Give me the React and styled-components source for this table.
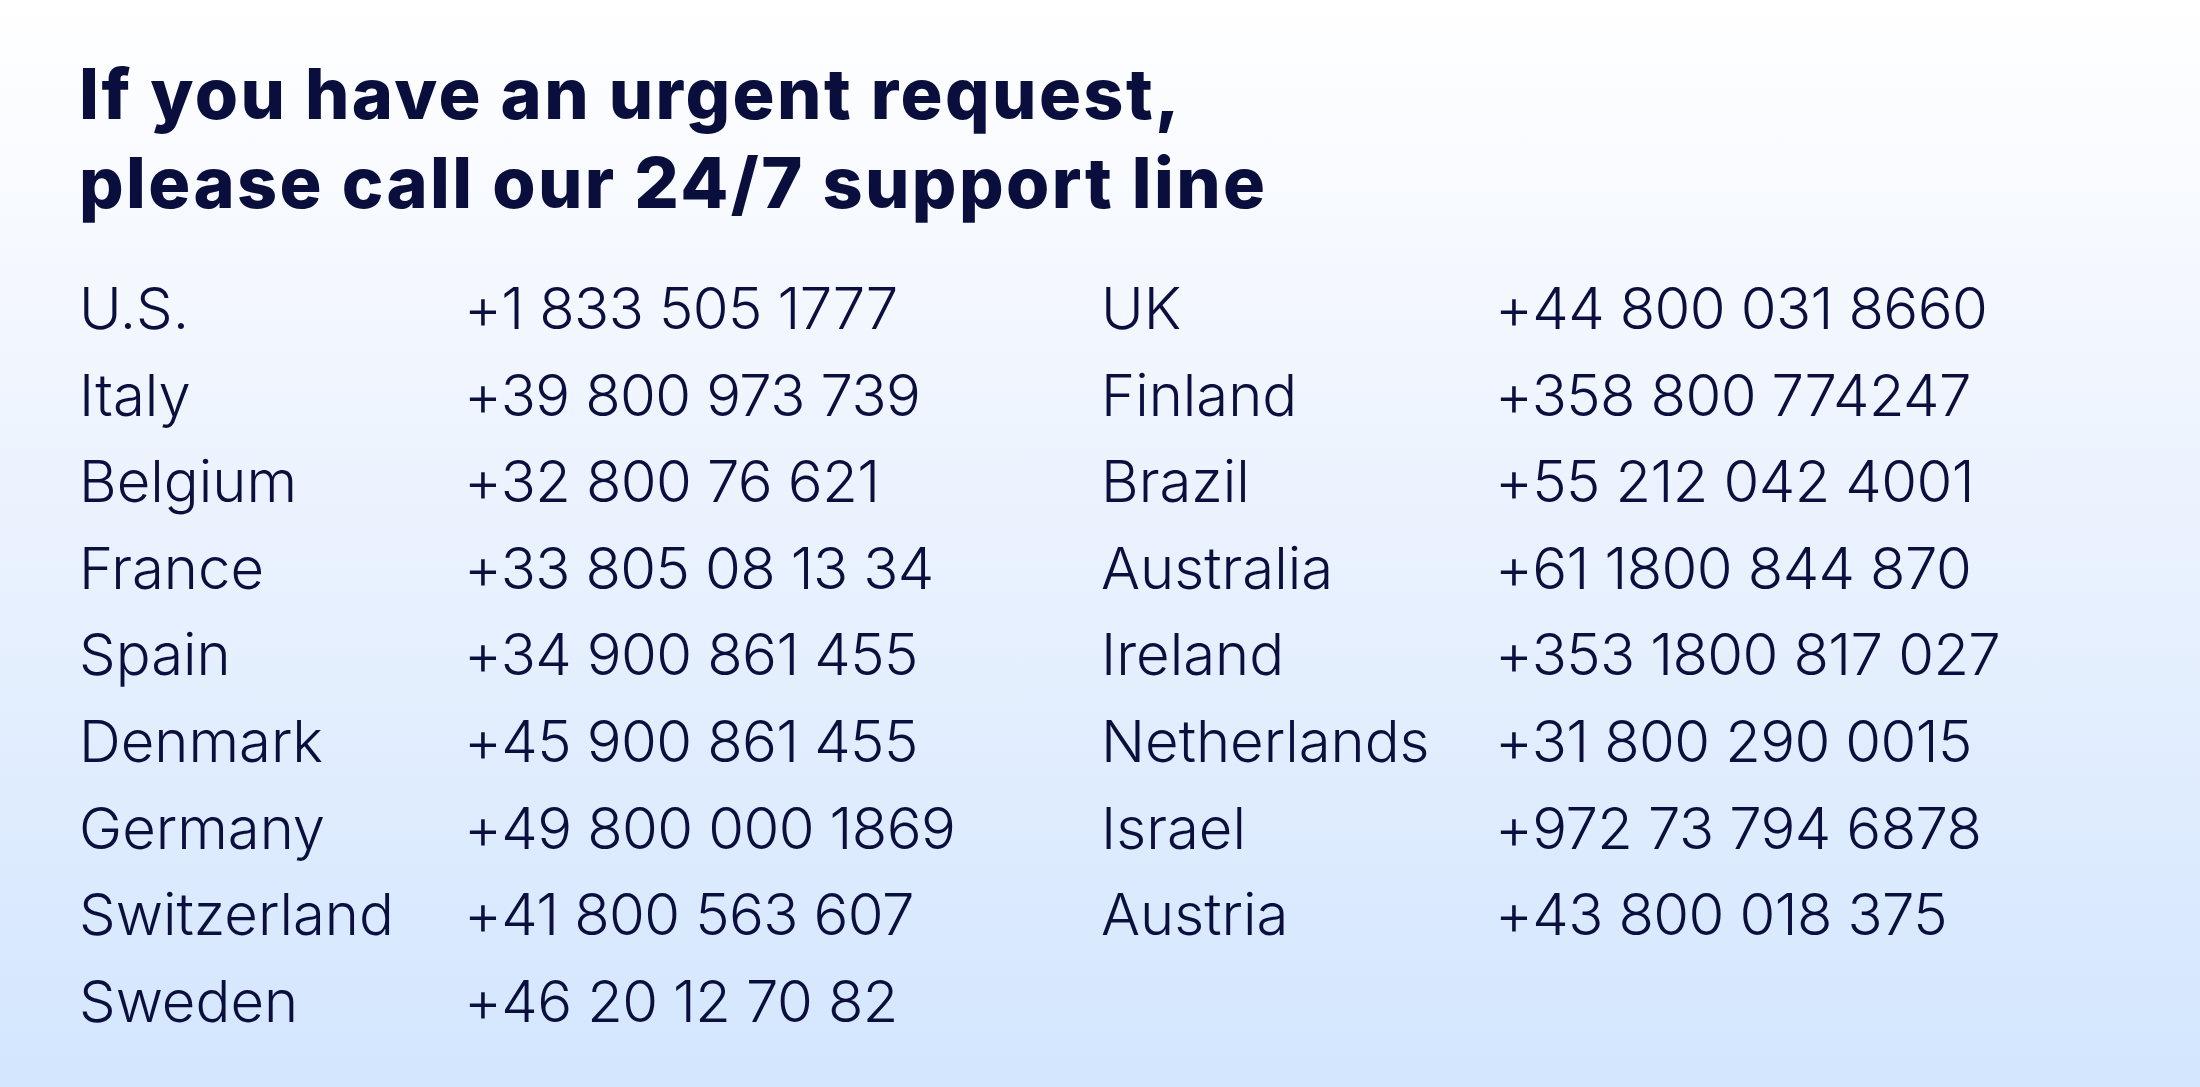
import React from 'react'
import styled, { createGlobalStyle } from 'styled-components'

const GlobalStyle = createGlobalStyle`
    html, body {
        margin: 0;
        padding: 0;
    }
    body {
        font-family: Inter, "Noto Sans", sans-serif;
        color: #0b0f3e;
    }
`

const leftNumbers = [
    ['U.S.', '+1 833 505 1777'],
    ['Italy', '+39 800 973 739'],
    ['Belgium', '+32 800 76 621'],
    ['France', '+33 805 08 13 34'],
    ['Spain', '+34 900 861 455'],
    ['Denmark', '+45 900 861 455'],
    ['Germany', '+49 800 000 1869'],
    ['Switzerland', '+41 800 563 607'],
    ['Sweden', '+46 20 12 70 82'],
]

const rightNumbers = [
    ['UK', '+44 800 031 8660'],
    ['Finland', '+358 800 774247'],
    ['Brazil', '+55 212 042 4001'],
    ['Australia', '+61 1800 844 870'],
    ['Ireland', '+353 1800 817 027'],
    ['Netherlands', '+31 800 290 0015'],
    ['Israel', '+972 73 794 6878'],
    ['Austria', '+43 800 018 375'],
]

function App()
{
    return (
        <>
            <GlobalStyle />
            <Page>
                <Heading>
                    If you have an urgent request,<br />
                    please call our 24/7 support line
                </Heading>
                <Columns>
                    <NumberList $labelWidth={385} $width={1022}>
                        {leftNumbers.map(([country, phone]) => (
                            <React.Fragment key={country}>
                                <Country>{country}</Country>
                                <Phone>{phone}</Phone>
                            </React.Fragment>
                        ))}
                    </NumberList>
                    <NumberList $labelWidth={394}>
                        {rightNumbers.map(([country, phone]) => (
                            <React.Fragment key={country}>
                                <Country>{country}</Country>
                                <Phone>{phone}</Phone>
                            </React.Fragment>
                        ))}
                    </NumberList>
                </Columns>
            </Page>
        </>
    )
}

export default App

const Page = styled.div`
    width: 2200px;
    height: 1087px;
    box-sizing: border-box;
    padding: 49px 0 0 79px;
    background: linear-gradient(180deg, #ffffff 0%, #eef4fe 40%, #d3e6fe 100%);
    overflow: hidden;
`

const Heading = styled.h1`
    margin: 0;
    font-family: Inter, sans-serif;
    font-weight: 800;
    font-size: 70px;
    line-height: 89px;
    letter-spacing: 2.4px;
    color: #0a0e3d;
`

const Columns = styled.div`
    display: flex;
    margin-top: 38px;
`

const NumberList = styled.div`
    display: grid;
    grid-template-columns: ${p => p.$labelWidth}px 1fr;
    grid-auto-rows: 86.6px;
    align-content: start;
    width: ${p => (p.$width ? `${p.$width}px` : 'auto')};
    font-family: Inter, sans-serif;
    font-weight: 300;
    font-size: 58px;
    line-height: 86.6px;
    color: #0b0f3e;
`

const Country = styled.div`
    white-space: nowrap;
`

const Phone = styled.div`
    white-space: nowrap;
    letter-spacing: -0.6px;
`
